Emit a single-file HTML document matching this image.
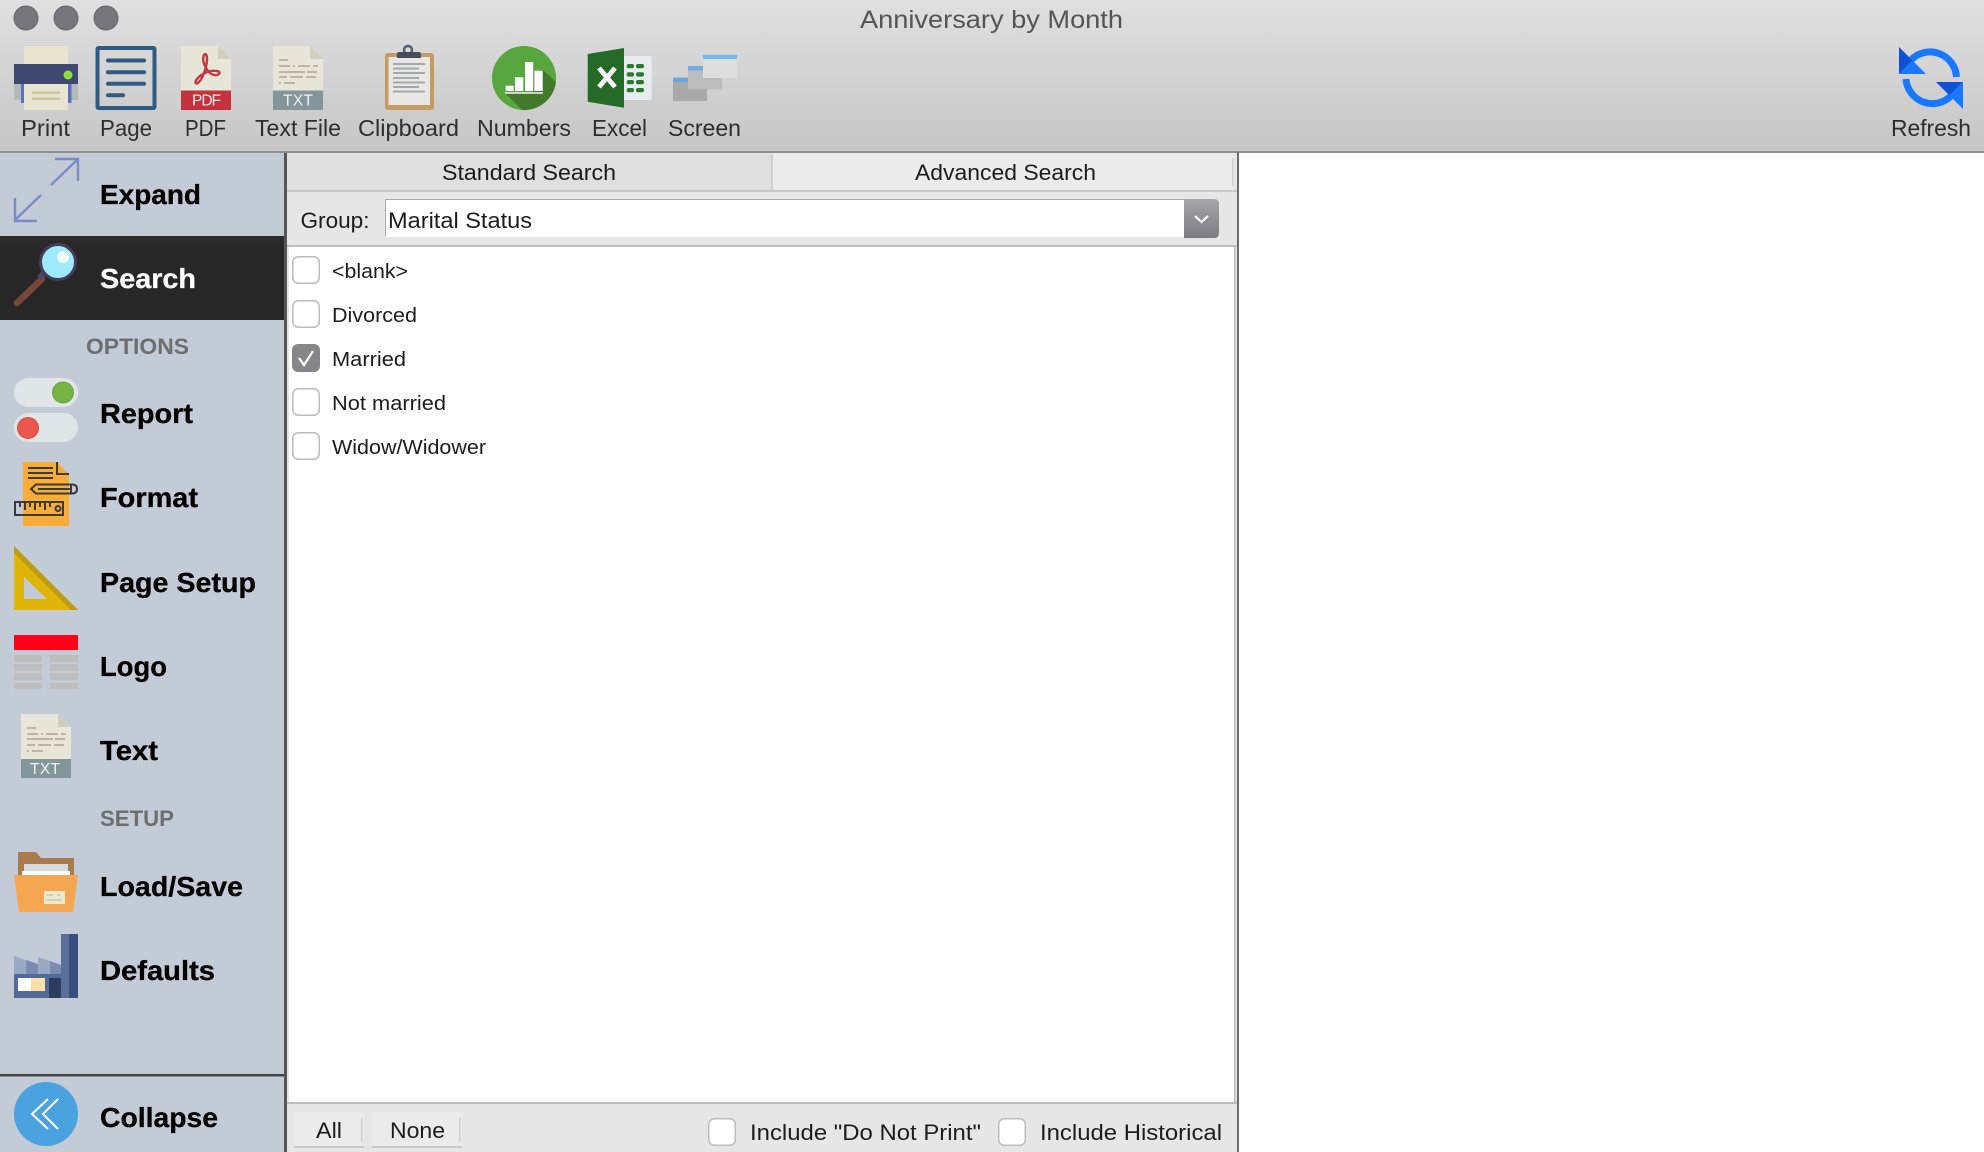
<!DOCTYPE html>
<html lang="en"><head><meta charset="utf-8"><title>Anniversary by Month</title>
<style>
html,body{margin:0;padding:0;width:1984px;height:1152px;overflow:hidden;background:#fff}
svg{display:block}
text{font-family:"Liberation Sans",sans-serif}
.tb{font-size:23px;fill:#2e2e2e}
.sb{font-size:28px;font-weight:700;fill:#000;stroke:#000;stroke-width:.3px}
.hd{font-size:22px;font-weight:700;fill:#6e6e70}
.m{font-size:22px;fill:#1c1c1c}
.l{font-size:20.5px;fill:#1c1c1c}
</style></head><body>
<svg xmlns="http://www.w3.org/2000/svg" width="1984" height="1152" viewBox="0 0 1984 1152">
<defs>
<linearGradient id="tg" x1="0" y1="0" x2="0" y2="1"><stop offset="0" stop-color="#e0e0e0"/><stop offset="1" stop-color="#c6c6c6"/></linearGradient>
<linearGradient id="dg" x1="0" y1="0" x2="0" y2="1"><stop offset="0" stop-color="#a6a6a8"/><stop offset="1" stop-color="#7c7c80"/></linearGradient>
<linearGradient id="sg" x1="0" y1="0" x2="0" y2="1"><stop offset="0" stop-color="#2b2b2b"/><stop offset=".2" stop-color="#272727"/></linearGradient>
</defs>
<rect width="1984" height="1152" fill="#fff"/>
<!-- title / toolbar -->
<rect width="1984" height="152" fill="url(#tg)"/>
<rect y="151" width="1984" height="2" fill="#8f8f8f"/>
<circle cx="26" cy="18" r="12" fill="#77767a" stroke="#69686c"/>
<circle cx="66" cy="18" r="12" fill="#77767a" stroke="#69686c"/>
<circle cx="106" cy="18" r="12" fill="#77767a" stroke="#69686c"/>
<text x="860" y="28" font-size="25" fill="#555" textLength="263" lengthAdjust="spacingAndGlyphs">Anniversary by Month</text>

<!-- Print -->
<rect x="24" y="46" width="44" height="20" fill="#e7e5cf"/>
<rect x="14" y="84" width="64" height="16" fill="#b4bab8"/>
<rect x="21" y="84" width="3.500" height="19" fill="#5b70c2"/><rect x="68" y="84" width="3.500" height="19" fill="#5b70c2"/>
<rect x="14" y="64" width="64" height="20" fill="#3f486e"/>
<circle cx="68" cy="75" r="4.500" fill="#8fe03f"/>
<rect x="24" y="84" width="44" height="26" fill="#e7e5cf"/>
<rect x="32" y="91.500" width="28" height="2.500" fill="#c9c7a2"/><rect x="32" y="97.500" width="28" height="2.500" fill="#c9c7a2"/>
<!-- Page -->
<rect x="97.500" y="48" width="57" height="60" fill="none" stroke="#2f5a82" stroke-width="4" rx="1"/>
<g stroke="#2f5a82" stroke-width="4" stroke-linecap="round"><path d="M108 60.500H144M108 72.300H144M108 83.700H144M108 95.300H123"/></g>
<!-- PDF -->
<path d="M181 46H218L231 59V110H181Z" fill="#e7e6d9"/><path d="M218 46L231 59H218Z" fill="#cfcebf"/>
<rect x="181" y="90.500" width="50" height="19.500" fill="#c4323e"/>
<path d="M204 55C202 60 204 64 206 68C209 73 213 76 217 75C221 74 220 71 216 71C210 70 202 73 197 79C194 83 196 85 199 82C203 78 207 66 207 59C207 54 205 53 204 55Z" fill="none" stroke="#c03a42" stroke-width="2.400"/>
<text x="192" y="105.500" font-size="15.500" fill="#f2e9e9" textLength="29" lengthAdjust="spacing">PDF</text>
<!-- TXT -->
<path d="M273 46H310L323 59V110H273Z" fill="#e7e6d9"/><path d="M310 46L323 59H310Z" fill="#cfcebf"/>
<rect x="273" y="90.500" width="50" height="19.500" fill="#83979a"/>
<g fill="#bfb2a8"><rect x="279" y="59" width="9" height="2"/><rect x="279" y="65" width="11" height="2"/><rect x="293" y="65" width="2" height="2"/><rect x="298" y="65" width="12" height="2"/><rect x="313" y="65" width="5" height="2"/><rect x="279" y="71" width="26" height="2"/><rect x="307" y="71" width="10" height="2"/><rect x="279" y="76" width="8" height="2"/><rect x="290" y="76" width="13" height="2"/><rect x="306" y="76" width="10" height="2"/><rect x="279" y="82" width="2" height="2"/><rect x="284" y="82" width="11" height="2"/></g>
<text x="283" y="105.500" font-size="15.500" fill="#f1f3f3" textLength="30" lengthAdjust="spacing">TXT</text>
<!-- Clipboard -->
<rect x="385" y="53" width="49" height="57" rx="3" fill="#c49b63"/>
<rect x="388.500" y="57" width="41.500" height="48" fill="#e9e7e3"/>
<circle cx="408" cy="50" r="4" fill="none" stroke="#565e6e" stroke-width="2.500"/>
<path d="M397 58V54Q397 52 399 52H419Q421 52 421 54V58Z" fill="#464e5e"/>
<g fill="#a5a9ae"><rect x="393" y="63" width="32" height="2"/><rect x="393" y="67.500" width="26" height="2"/><rect x="393" y="72" width="32" height="2"/><rect x="393" y="77" width="26" height="2"/><rect x="393" y="81.500" width="32" height="2"/><rect x="393" y="86" width="26" height="2"/><rect x="393" y="90.500" width="32" height="2"/></g>
<!-- Numbers -->
<circle cx="524" cy="78" r="32" fill="#58a63e"/>
<path d="M505 93L522 110A32 32 0 0 0 556 82L543 70L534 72L533 62V93Z" fill="#42792b"/>
<g fill="#fff"><rect x="505.700" y="85.700" width="8" height="5.300"/><rect x="515" y="77.300" width="8.300" height="13.700"/><rect x="525" y="62" width="8.300" height="29"/><rect x="534.300" y="70.700" width="8.400" height="20.300"/><rect x="505" y="92.300" width="38" height="1.400"/></g>
<!-- Excel -->
<rect x="620" y="56" width="31.700" height="44" rx="2" fill="#e8ecee"/>
<g fill="#2a7a2e"><rect x="626.700" y="64" width="7.300" height="4.300" rx="2"/><rect x="636" y="64" width="8" height="4.300" rx="2"/><rect x="626.700" y="72.300" width="7.300" height="4.300" rx="2"/><rect x="636" y="72.300" width="8" height="4.300" rx="2"/><rect x="626.700" y="80" width="7.300" height="4.300" rx="2"/><rect x="636" y="80" width="8" height="4.300" rx="2"/><rect x="626.700" y="88" width="7.300" height="4.300" rx="2"/><rect x="636" y="88" width="8" height="4.300" rx="2"/></g>
<path d="M587.700 54L624 48V107.700L587.700 101.700Z" fill="#266a27"/>
<path d="M599 68L615 87M615 68L599 87" stroke="#fff" stroke-width="4.800" fill="none"/>
<!-- Screen -->
<rect x="673" y="77.700" width="34" height="23.300" fill="#a9a9a9"/><rect x="673" y="77.700" width="15" height="4.300" fill="#68a8de"/>
<rect x="688" y="66" width="34" height="23.300" fill="#bcbcbc"/><rect x="688" y="66" width="15" height="4.500" fill="#70aee0"/>
<rect x="703" y="54.700" width="34" height="23.300" fill="#dedede"/><rect x="703" y="54.700" width="34" height="4.300" fill="#74b8ee"/>
<!-- Refresh -->
<path d="M1911 60A26.500 26.500 0 0 1 1956.500 77" fill="none" stroke="#1a77ff" stroke-width="7"/>
<path d="M1906 79A26.500 26.500 0 0 0 1951 96" fill="none" stroke="#1a77ff" stroke-width="7"/>
<path d="M1899 74H1926L1912.500 60.500Z" fill="#1a77ff"/><path d="M1899 47V74L1912.500 60.500Z" fill="#0d52d6"/>
<path d="M1963 82V109L1949.500 95.500Z" fill="#1a77ff"/><path d="M1936 82H1963L1949.500 95.500Z" fill="#0d52d6"/>
<!-- toolbar labels -->
<text class="tb" x="21" y="136" textLength="49" lengthAdjust="spacingAndGlyphs">Print</text>
<text class="tb" x="100" y="136" textLength="52" lengthAdjust="spacingAndGlyphs">Page</text>
<text class="tb" x="185" y="136" textLength="41" lengthAdjust="spacingAndGlyphs">PDF</text>
<text class="tb" x="255" y="136" textLength="86" lengthAdjust="spacingAndGlyphs">Text File</text>
<text class="tb" x="358" y="136" textLength="101" lengthAdjust="spacingAndGlyphs">Clipboard</text>
<text class="tb" x="477" y="136" textLength="94" lengthAdjust="spacingAndGlyphs">Numbers</text>
<text class="tb" x="592" y="136" textLength="55" lengthAdjust="spacingAndGlyphs">Excel</text>
<text class="tb" x="668" y="136" textLength="73" lengthAdjust="spacingAndGlyphs">Screen</text>
<text class="tb" x="1891" y="136" textLength="80" lengthAdjust="spacingAndGlyphs">Refresh</text>

<!-- sidebar -->
<rect y="153" width="284" height="999" fill="#c3cbd6"/>
<rect y="236" width="284" height="84" fill="url(#sg)"/>
<rect x="284" y="153" width="3" height="999" fill="#565656"/>
<rect y="1074" width="284" height="2.500" fill="#444"/>
<!-- expand -->
<g fill="none" stroke="#7b8bc8" stroke-width="2.400"><path d="M51 185L78 159M55 159H78V181"/><path d="M41 195L15 220M15 198V221H37"/></g>
<!-- search -->
<path d="M17 303L42 279" stroke="#79463a" stroke-width="6.500" stroke-linecap="round"/>
<path d="M39 278L45 272" stroke="#4a4560" stroke-width="6"/>
<circle cx="58" cy="262" r="17.500" fill="#9fecff" stroke="#453d5a" stroke-width="3"/>
<circle cx="63" cy="257" r="6" fill="#f2fdff"/>
<!-- report -->
<rect x="14" y="378" width="64" height="29" rx="14.500" fill="#e0e5e8"/>
<circle cx="63" cy="392.500" r="10.500" fill="#77b341" stroke="#69a23a" stroke-width="1"/>
<rect x="14" y="413" width="64" height="29" rx="14.500" fill="#e0e5e8"/>
<circle cx="28" cy="428" r="10.500" fill="#ea574f" stroke="#d24e47" stroke-width="1"/>
<!-- format -->
<path d="M23 462H57L69 474V526H23Z" fill="#f9ac36"/>
<path d="M57 462V474H69" fill="none" stroke="#3a3a3a" stroke-width="2"/>
<g stroke="#3a3a3a" stroke-width="2" fill="none"><path d="M28 468H53M28 473H53M28 478H53"/>
<path d="M31 489L36 484.500H72Q77 484.500 77 489Q77 493.500 72 493.500H36Z"/><path d="M71 484.500V493.500M38 489H70"/>
<rect x="15" y="502" width="48" height="13"/><path d="M20 502V507M25 502V510M30 502V507M35 502V510M40 502V507M45 502V510M50 502V507"/><circle cx="58" cy="508.500" r="2.500"/></g>
<!-- page setup -->
<path d="M14 546L78 610H14Z" fill="#dfb507"/>
<path d="M14 546L78 610H71L14 553Z" fill="#bc9a12"/>
<path d="M24 577L47 599H24Z" fill="#c3cbd6"/>
<!-- logo -->
<rect x="14" y="635" width="64" height="15" fill="#ff0019"/>
<g fill="#bebebe"><rect x="14" y="655" width="28" height="7"/><rect x="50" y="655" width="28" height="7"/><rect x="14" y="664" width="28" height="7"/><rect x="50" y="664" width="28" height="7"/><rect x="14" y="673" width="28" height="7"/><rect x="50" y="673" width="28" height="7"/><rect x="14" y="683" width="28" height="6"/><rect x="50" y="683" width="28" height="6"/></g>
<!-- text icon -->
<path d="M21 714H58L71 727V778H21Z" fill="#e7e6d9"/><path d="M58 714L71 727H58Z" fill="#cfcebf"/>
<rect x="21" y="759" width="50" height="19" fill="#83979a"/>
<g fill="#bfb2a8"><rect x="27" y="727" width="9" height="2"/><rect x="27" y="733" width="11" height="2"/><rect x="41" y="733" width="2" height="2"/><rect x="46" y="733" width="12" height="2"/><rect x="61" y="733" width="5" height="2"/><rect x="27" y="738" width="26" height="2"/><rect x="55" y="738" width="10" height="2"/><rect x="27" y="744" width="8" height="2"/><rect x="38" y="744" width="13" height="2"/><rect x="54" y="744" width="10" height="2"/><rect x="27" y="750" width="2" height="2"/><rect x="32" y="750" width="11" height="2"/></g>
<text x="30" y="774" font-size="15.500" fill="#f1f3f3" textLength="30" lengthAdjust="spacing">TXT</text>
<!-- load/save -->
<path d="M18 852H36L41 858H74V880H18Z" fill="#a97b4f"/>
<rect x="24" y="864" width="44" height="12" fill="#d7dddd"/><rect x="22" y="871" width="48" height="8" fill="#fff"/>
<path d="M14 875H78L73 912H19Z" fill="#f5a650"/>
<rect x="44" y="891" width="21" height="13" fill="#ece8cf"/>
<path d="M47 895H53M57 895H60M47 900H62" stroke="#c9c7a2" stroke-width="1.500"/>
<!-- defaults -->
<path d="M14 956L26 960V964H38V957L50 961V974H14Z" fill="#9aa9c4"/>
<path d="M26 960L38 964V974H26Z" fill="#7a8cb0"/><path d="M50 961L61 965V974H50Z" fill="#7a8cb0"/>
<rect x="14" y="974" width="47" height="24" fill="#526a96"/>
<rect x="61" y="934" width="8" height="64" fill="#5a6f9a"/><rect x="69" y="934" width="9" height="64" fill="#364f7f"/>
<rect x="18" y="978" width="13" height="13" fill="#fff"/><rect x="31" y="978" width="14" height="13" fill="#fde0a8"/>
<rect x="49" y="978" width="12" height="20" fill="#2c3c5d"/>
<!-- collapse -->
<circle cx="46" cy="1114" r="32" fill="#4aa3df"/>
<path d="M48 1099L32 1114L48 1129M58 1099L43 1114L58 1129" fill="none" stroke="#fff" stroke-width="2"/>
<!-- sidebar labels -->
<text class="sb" x="100" y="204" textLength="101" lengthAdjust="spacingAndGlyphs">Expand</text>
<text class="sb" x="100" y="288" textLength="96" lengthAdjust="spacingAndGlyphs" style="fill:#fff;stroke:#fff">Search</text>
<text class="hd" x="86" y="354" textLength="103" lengthAdjust="spacingAndGlyphs">OPTIONS</text>
<text class="sb" x="100" y="423" textLength="93" lengthAdjust="spacingAndGlyphs">Report</text>
<text class="sb" x="100" y="507" textLength="98" lengthAdjust="spacingAndGlyphs">Format</text>
<text class="sb" x="100" y="592" textLength="156" lengthAdjust="spacingAndGlyphs">Page Setup</text>
<text class="sb" x="100" y="676" textLength="67" lengthAdjust="spacingAndGlyphs">Logo</text>
<text class="sb" x="100" y="760" textLength="58" lengthAdjust="spacingAndGlyphs">Text</text>
<text class="hd" x="100" y="826" textLength="74" lengthAdjust="spacingAndGlyphs">SETUP</text>
<text class="sb" x="100" y="896" textLength="143" lengthAdjust="spacingAndGlyphs">Load/Save</text>
<text class="sb" x="100" y="980" textLength="115" lengthAdjust="spacingAndGlyphs">Defaults</text>
<text class="sb" x="100" y="1127" textLength="118" lengthAdjust="spacingAndGlyphs">Collapse</text>

<!-- middle panel -->
<rect x="287" y="153" width="950" height="999" fill="#e6e6e6"/>
<rect x="287" y="153" width="486" height="37" fill="#dfdfdf"/>
<rect x="773" y="153" width="461" height="37" fill="#ebebeb"/>
<rect x="771" y="155" width="2" height="35" fill="#cfcfcf"/><rect x="1232" y="158" width="1.500" height="28" fill="#cfcfcf"/>
<rect x="287" y="190" width="950" height="2" fill="#c8c8c8"/>
<rect x="385" y="199" width="800" height="38" fill="#fff"/>
<path d="M385.500 237V199.500H1185" fill="none" stroke="#ababab" stroke-width="1"/>
<path d="M1184 199H1214Q1219 199 1219 204V233Q1219 238 1214 238H1184Z" fill="url(#dg)"/>
<path d="M1195 216L1201.500 222L1208 216" fill="none" stroke="#fff" stroke-width="2.200"/>
<rect x="287" y="245" width="950" height="2" fill="#bdbdbd"/>
<rect x="289" y="247" width="945" height="856" fill="#fff"/>
<rect x="287" y="1102" width="950" height="2" fill="#bdbdbd"/>
<rect x="1234" y="247" width="1.500" height="857" fill="#bdbdbd"/>
<rect x="1237" y="152" width="2" height="1000" fill="#6a6a6a"/>

<text class="m" x="442" y="180" textLength="174" lengthAdjust="spacingAndGlyphs">Standard Search</text>
<text class="m" x="915" y="180" textLength="181" lengthAdjust="spacingAndGlyphs">Advanced Search</text>
<text class="m" x="300.500" y="228" textLength="69" lengthAdjust="spacingAndGlyphs">Group:</text>
<text class="m" x="388" y="228" textLength="144" lengthAdjust="spacingAndGlyphs">Marital Status</text>

<!-- list -->
<g fill="#fff" stroke="#bcbcbc" stroke-width="1.500">
<rect x="292.750" y="256.750" width="26.500" height="26.500" rx="5.500"/>
<rect x="292.750" y="300.750" width="26.500" height="26.500" rx="5.500"/>
<rect x="292.750" y="388.750" width="26.500" height="26.500" rx="5.500"/>
<rect x="292.750" y="432.750" width="26.500" height="26.500" rx="5.500"/>
<rect x="708.750" y="1118.750" width="26.500" height="26.500" rx="5.500"/>
<rect x="998.750" y="1118.750" width="26.500" height="26.500" rx="5.500"/>
</g>
<rect x="292" y="344" width="28" height="28" rx="6" fill="#85858a"/>
<path d="M299 358L304 365L313 351" fill="none" stroke="#fff" stroke-width="2.200"/>
<text class="l" x="332" y="278" textLength="76" lengthAdjust="spacingAndGlyphs">&lt;blank&gt;</text>
<text class="l" x="332" y="322" textLength="85" lengthAdjust="spacingAndGlyphs">Divorced</text>
<text class="l" x="332" y="366" textLength="74" lengthAdjust="spacingAndGlyphs">Married</text>
<text class="l" x="332" y="410" textLength="114" lengthAdjust="spacingAndGlyphs">Not married</text>
<text class="l" x="332" y="454" textLength="154" lengthAdjust="spacingAndGlyphs">Widow/Widower</text>

<!-- footer -->
<rect x="294" y="1112" width="70" height="36" fill="#ebebeb"/><rect x="294" y="1146" width="70" height="2" fill="#c9c9c9"/><rect x="361" y="1118" width="1.500" height="24" fill="#cfcfcf"/>
<rect x="372" y="1112" width="90" height="36" fill="#ebebeb"/><rect x="372" y="1146" width="90" height="2" fill="#c9c9c9"/><rect x="459" y="1118" width="1.500" height="24" fill="#cfcfcf"/>
<text class="m" x="316" y="1138" textLength="26" lengthAdjust="spacingAndGlyphs">All</text>
<text class="m" x="390" y="1138" textLength="55" lengthAdjust="spacingAndGlyphs">None</text>
<text class="m" x="750" y="1140" textLength="231" lengthAdjust="spacingAndGlyphs">Include "Do Not Print"</text>
<text class="m" x="1040" y="1140" textLength="182" lengthAdjust="spacingAndGlyphs">Include Historical</text>
</svg>
</body></html>
